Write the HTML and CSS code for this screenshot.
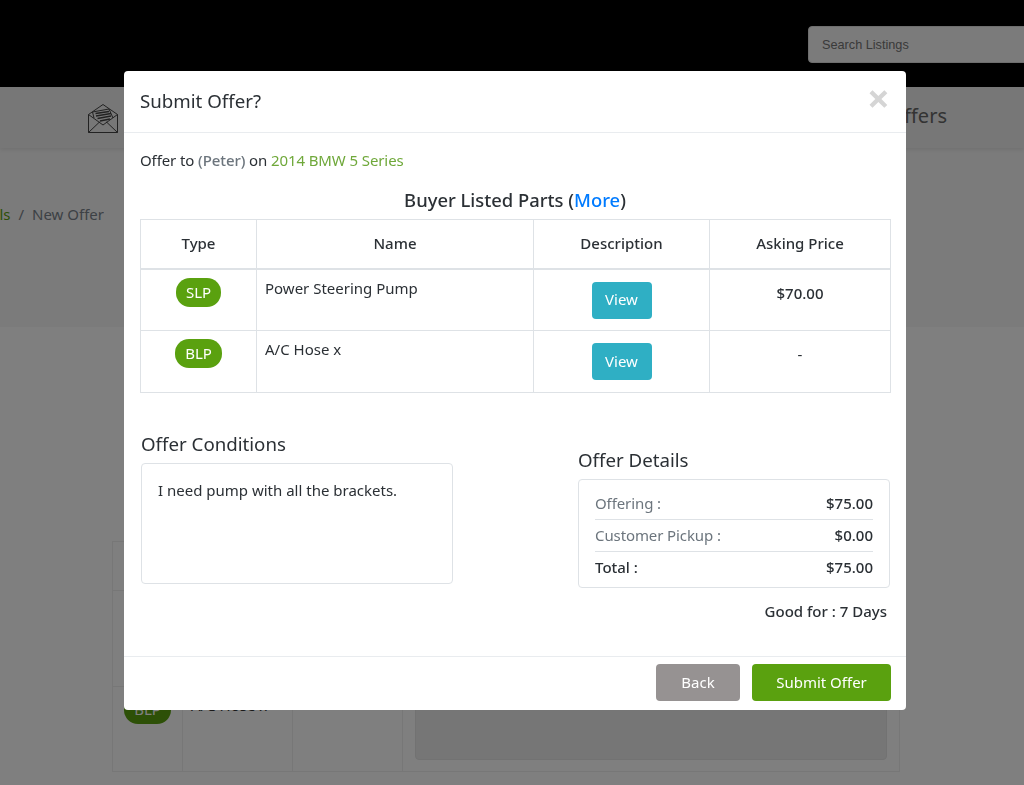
FILE: index.html
```html
<!DOCTYPE html>
<html lang="en">
<head>
    <meta charset="UTF-8">
    <title>New Offer</title>
    <link rel="stylesheet" href="styles.css">
</head>
<body>
    <header class="topbar">
        <input class="search" type="text" placeholder="Search Listings">
    </header>

    <nav class="mainnav">
        <div class="nav-item">
            <svg class="nav-icon" viewBox="0 0 30 30" fill="none" stroke="#444" stroke-width="1">
                <path d="M0.5 10.5 15 0.5 29.5 10.5V28.5H0.5Z"/>
                <path d="M0.5 28.5 11.5 18M29.5 28.5 18.5 18M0.5 10.5 15 21 29.5 10.5"/>
                <path d="M6 14 4.5 8 21 5 25 14"/>
                <path d="M7.5 9.5 21 7.5M8 12 23 9.5M9.5 14.5 23 12M12 17 22 15" stroke-width="1.4"/>
            </svg>
            <span>Messages</span>
        </div>
        <div class="nav-item"><span>My Offers</span></div>
    </nav>

    <div class="crumbs">
        <div class="crumbs-inner">
            <a href="#">Details</a>
            <span class="crumb-sep">/</span>
            <span>New Offer</span>
        </div>
    </div>

    <div class="bg-table">
        <div class="bg-row"></div>
        <div class="bg-row bg-row-mid"></div>
        <div class="bg-row bg-row-last">
            <div class="bg-cell bg-type"><span class="badge">BLP</span></div>
            <div class="bg-cell bg-name">A/C Hose x</div>
            <div class="bg-cell bg-desc"></div>
            <div class="bg-cell bg-rest"><div class="bg-box"></div></div>
        </div>
    </div>

    <div class="backdrop"></div>

    <div class="modal">
        <div class="modal-header">
            <h5>Submit Offer?</h5>
            <span class="close">&times;</span>
        </div>

        <div class="modal-body">
            <p class="offer-to">Offer to <span class="buyer">(Peter)</span> on <a href="#" class="car">2014 BMW 5 Series</a></p>
            <h4 class="parts-title">Buyer Listed Parts (<a href="#">More</a>)</h4>

            <table class="parts">
                <thead>
                    <tr>
                        <th class="col-type">Type</th>
                        <th class="col-name">Name</th>
                        <th class="col-desc">Description</th>
                        <th>Asking Price</th>
                    </tr>
                </thead>
                <tbody>
                    <tr>
                        <td class="center"><span class="badge">SLP</span></td>
                        <td class="part-name">Power Steering Pump</td>
                        <td class="center"><button class="btn btn-info">View</button></td>
                        <td class="center price">$70.00</td>
                    </tr>
                    <tr>
                        <td class="center"><span class="badge">BLP</span></td>
                        <td class="part-name">A/C Hose x</td>
                        <td class="center"><button class="btn btn-info">View</button></td>
                        <td class="center dash">-</td>
                    </tr>
                </tbody>
            </table>

            <div class="offer-row">
                <div class="conditions">
                    <h5>Offer Conditions</h5>
                    <div class="box conditions-box">I need pump with all the brackets.</div>
                </div>
                <div class="details">
                    <h5>Offer Details</h5>
                    <div class="box details-box">
                        <div class="line"><span class="line-label">Offering :</span><b>$75.00</b></div>
                        <div class="line"><span class="line-label">Customer Pickup :</span><b>$0.00</b></div>
                        <div class="line line-total"><b>Total :</b><b>$75.00</b></div>
                    </div>
                    <div class="good-for">Good for : 7 Days</div>
                </div>
            </div>
        </div>

        <div class="modal-footer">
            <button class="btn btn-back">Back</button>
            <button class="btn btn-submit">Submit Offer</button>
        </div>
    </div>
</body>
</html>
```

FILE: styles.css
```css
* {
    margin: 0;
    padding: 0;
    box-sizing: border-box;
}

body {
    font-family: 'Noto Sans', sans-serif;
    font-size: 15px;
    color: #2b3035;
    background: #fff;
    height: 785px;
    overflow: hidden;
}

a {
    text-decoration: none;
}

.topbar {
    background: #000;
    height: 87px;
    padding: 26px 0 0 808px;
}

.search {
    display: block;
    width: 240px;
    height: 37px;
    padding: 0 13px;
    border: 1px solid #ddd;
    border-radius: 4px;
    background: #f6f6f6;
    font-family: 'Liberation Sans', sans-serif;
    font-size: 12.7px;
}

.mainnav {
    position: relative;
    height: 61px;
    display: flex;
    justify-content: space-between;
    align-items: center;
    padding: 0 77px 4px 88px;
    background: #eee;
    box-shadow: 0 2px 4px rgba(0, 0, 0, 0.08);
    font-size: 20px;
    color: #666;
}

.nav-item {
    display: flex;
    align-items: center;
    gap: 8px;
}

.nav-icon {
    width: 30px;
    height: 30px;
    margin-top: 6px;
}

.crumbs {
    height: 179px;
    padding-top: 56px;
    background: #f6f6f6;
}

.crumbs-inner {
    width: 104px;
    overflow: hidden;
    display: flex;
    justify-content: flex-end;
    gap: 8px;
    white-space: nowrap;
    color: #7a828a;
}

.crumbs-inner a {
    color: #5aa10f;
}

.bg-table {
    width: 788px;
    margin: 214px 0 0 112px;
    border: 1px solid #eee;
}

.bg-row {
    height: 49px;
    border-bottom: 1px solid #eee;
}

.bg-row-mid {
    height: 96px;
}

.bg-row-last {
    height: 84px;
    border-bottom: 0;
    display: flex;
}

.bg-cell {
    border-right: 1px solid #eee;
}

.bg-type {
    width: 70px;
    padding-top: 8px;
    text-align: center;
}

.bg-name {
    width: 110px;
    padding: 8px;
    color: #333;
}

.bg-desc {
    width: 110px;
}

.bg-rest {
    flex: 1;
    padding: 0 12px 11px;
    border-right: 0;
}

.bg-box {
    height: 100%;
    background: #ededed;
    border: 1px solid #e4e4e4;
    border-radius: 4px;
}

.backdrop {
    position: fixed;
    inset: 0;
    background: rgba(0, 0, 0, 0.5);
}

.modal {
    position: fixed;
    top: 71px;
    left: 124px;
    width: 782px;
    height: 639px;
    background: #fff;
    border-radius: 4px;
    display: flex;
    flex-direction: column;
}

.modal-header {
    height: 62px;
    padding: 0 16px;
    display: flex;
    justify-content: space-between;
    align-items: center;
    border-bottom: 1px solid #e9ecef;
}

.modal-header h5 {
    font-size: 18.7px;
    font-weight: 400;
    margin-top: -2px;
}

.close {
    font-size: 40px;
    font-weight: 700;
    line-height: 20px;
    color: #d5d5d5;
    margin: -7px 0 0 0;
}

.modal-body {
    flex: 1;
    padding: 17px 16px 0;
}

.offer-to {
    letter-spacing: -0.1px;
}

.buyer {
    font-weight: 500;
    color: #6c757d;
}

.car {
    color: #6fa83a;
}

.parts-title {
    margin-top: 16px;
    text-align: center;
    font-size: 18.4px;
    font-weight: 500;
    line-height: 27px;
}

.parts-title a {
    color: #007bff;
}

.parts {
    width: 751px;
    margin-top: 6px;
    border-collapse: collapse;
    table-layout: fixed;
}

.parts th,
.parts td {
    border: 1px solid #dee2e6;
    padding: 8px;
}

.parts th {
    height: 49px;
    padding-top: 6px;
    text-align: center;
    font-weight: 500;
    border-bottom-width: 2px;
}

.parts td {
    height: 62px;
    vertical-align: top;
}

.parts .part-name {
    padding-top: 8px;
}

.col-type {
    width: 116px;
}

.col-name {
    width: 277px;
}

.col-desc {
    width: 176px;
}

.center {
    text-align: center;
}

.badge {
    display: inline-block;
    padding: 0 10px;
    height: 29px;
    line-height: 29px;
    border-radius: 14px;
    background: #5aa10f;
    color: #fff;
}

.parts .price {
    font-weight: 500;
    padding-top: 13px;
}

.parts .dash {
    padding-top: 13px;
}

.btn {
    height: 37px;
    border: 0;
    border-radius: 4px;
    color: #fff;
    font-family: inherit;
    font-size: 15px;
    padding-bottom: 2px;
}

.btn-info {
    width: 60px;
    margin-top: 4px;
    background: #2fafc4;
}

.offer-row {
    display: flex;
    justify-content: space-between;
    margin-top: 37px;
}

.conditions {
    width: 312px;
    margin-left: 1px;
}

.offer-row h5 {
    font-size: 18.7px;
    font-weight: 400;
    line-height: 27px;
    margin-bottom: 6px;
}

.box {
    border: 1px solid #dee2e6;
    border-radius: 4px;
}

.conditions-box {
    height: 121px;
    padding: 16px;
}

.details {
    width: 312px;
    margin-top: 16px;
}

.details-box {
    height: 109px;
    padding: 8px 16px 0;
}

.line {
    display: flex;
    justify-content: space-between;
    height: 32px;
    line-height: 30px;
    border-bottom: 1px solid #dee2e6;
}

.line b,
.good-for {
    font-weight: 500;
}

.line-label {
    color: #6c757d;
    letter-spacing: -0.1px;
}

.line-total {
    border-bottom: 0;
}

.good-for {
    margin-top: 13px;
    padding-right: 3px;
    text-align: right;
}

.modal-footer {
    height: 54px;
    padding: 7px 15px 7px 16px;
    display: flex;
    justify-content: flex-end;
    gap: 12px;
    border-top: 1px solid #e9ecef;
}

.btn-back {
    width: 84px;
    background: #969292;
}

.btn-submit {
    width: 139px;
    background: #5aa10f;
}
```
